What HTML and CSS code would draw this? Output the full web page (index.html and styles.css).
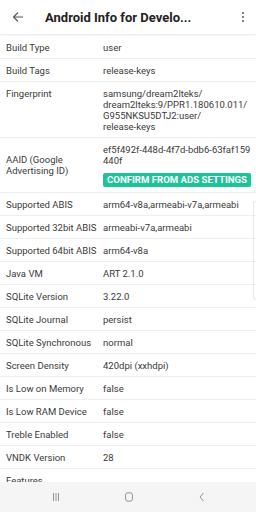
FILE: index.html
```html
<!DOCTYPE html>
<html>
<head>
<meta charset="utf-8">
<link rel="stylesheet" href="styles.css">
</head>
<body>
<div class="screen">
  <header class="appbar">
    <svg class="back" width="12" height="12" viewBox="0 0 12 12"><path d="M11 6H1.5M6 1.5L1.5 6L6 10.5" fill="none" stroke="#555" stroke-width="1.1"/></svg>
    <div class="title">Android Info for Develo...</div>
    <svg class="kebab" width="4" height="12" viewBox="0 0 4 12"><circle cx="2" cy="2" r="1.1" fill="#666"/><circle cx="2" cy="6" r="1.1" fill="#666"/><circle cx="2" cy="10" r="1.1" fill="#666"/></svg>
  </header>
  <main class="list">
    <div class="row"><div class="label">Build Type</div><div class="value">user</div></div>
    <div class="row"><div class="label">Build Tags</div><div class="value">release-keys</div></div>
    <div class="row top"><div class="label">Fingerprint</div><div class="value">samsung/dream2lteks/<br>dream2lteks:9/PPR1.180610.011/<br>G955NKSU5DTJ2:user/<br>release-keys</div></div>
    <div class="row"><div class="label">AAID (Google<br>Advertising ID)</div><div class="value">ef5f492f-448d-4f7d-bdb6-63faf159<br>440f<div class="btn">CONFIRM FROM ADS SETTINGS</div></div></div>
    <div class="row"><div class="label">Supported ABIS</div><div class="value">arm64-v8a,armeabi-v7a,armeabi</div></div>
    <div class="row"><div class="label">Supported 32bit ABIS</div><div class="value">armeabi-v7a,armeabi</div></div>
    <div class="row"><div class="label">Supported 64bit ABIS</div><div class="value">arm64-v8a</div></div>
    <div class="row"><div class="label">Java VM</div><div class="value">ART 2.1.0</div></div>
    <div class="row"><div class="label">SQLite Version</div><div class="value">3.22.0</div></div>
    <div class="row"><div class="label">SQLite Journal</div><div class="value">persist</div></div>
    <div class="row"><div class="label">SQLite Synchronous</div><div class="value">normal</div></div>
    <div class="row"><div class="label">Screen Density</div><div class="value">420dpi (xxhdpi)</div></div>
    <div class="row"><div class="label">Is Low on Memory</div><div class="value">false</div></div>
    <div class="row"><div class="label">Is Low RAM Device</div><div class="value">false</div></div>
    <div class="row"><div class="label">Treble Enabled</div><div class="value">false</div></div>
    <div class="row"><div class="label">VNDK Version</div><div class="value">28</div></div>
    <div class="row"><div class="label">Features</div><div class="value"></div></div>
  </main>
  <div class="scrollthumb"></div>
  <nav class="navbar">
    <svg width="10" height="10" viewBox="0 0 10 10"><path d="M2.5 1v8M5 1v8M7.5 1v8" stroke="#7a7a7a" stroke-width="0.8"/></svg>
    <svg width="10" height="10" viewBox="0 0 10 10"><rect x="1.5" y="0.8" width="7" height="8.4" rx="2.4" fill="none" stroke="#7a7a7a" stroke-width="0.8"/></svg>
    <svg width="10" height="10" viewBox="0 0 10 10"><path d="M6.5 1L3 5l3.5 4" fill="none" stroke="#7a7a7a" stroke-width="0.8"/></svg>
  </nav>
</div>
</body>
</html>
```
FILE: styles.css
```css
* { box-sizing: border-box; }
html, body { margin: 0; padding: 0; background: #fff; }
body { font-family: Roboto, "Noto Sans", sans-serif; color: #333; }
.screen { width: 256px; height: 512px; display: flex; flex-direction: column; overflow: hidden; position: relative; }
.appbar { height: 34px; flex: none; display: flex; align-items: center; padding: 0 12px 0 12px; background: #fff; box-shadow: 0 1px 2px rgba(0,0,0,0.10); position: relative; z-index: 1; }
.back { flex: none; }
.title { flex: 1; margin-left: 21px; font-size: 13px; font-weight: 700; color: #222; white-space: nowrap; }
.kebab { flex: none; margin-right: -1px; }
.list { flex: 1; overflow: hidden; padding-top: 2px; }
.row { display: grid; grid-template-columns: 97px 1fr; align-items: center; padding: 5.5px 4px 5.5px 6px; border-bottom: 1px solid #efefef; font-size: 9.5px; line-height: 11px; }
.row.top { align-items: start; }
.label { color: #3a3a3a; white-space: nowrap; }
.value { color: #3a3a3a; white-space: nowrap; }
.btn { margin-top: 7px; height: 14px; background: #1ec497; color: #fff; font-weight: 700; font-size: 9.6px; line-height: 14px; text-align: center; border-radius: 2px; margin-right: 1px; }
.scrollthumb { position: absolute; left: 253px; top: 201px; width: 3px; height: 99px; border: 1px solid #e8e8e8; border-right: none; border-radius: 3px 0 0 3px; }
.navbar { height: 30px; flex: none; background: #f5f5f5; display: flex; justify-content: space-between; align-items: center; padding: 0 49px 0 51px; }
```
